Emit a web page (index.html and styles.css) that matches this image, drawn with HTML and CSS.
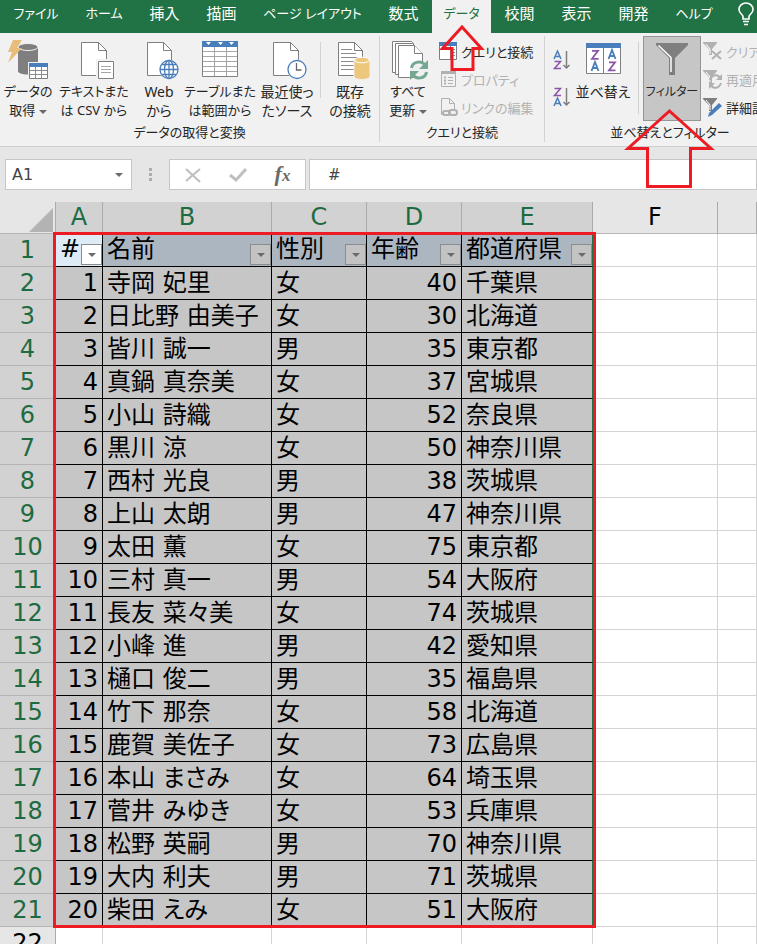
FILE: index.html
```html
<!DOCTYPE html>
<html lang="ja">
  <head>
    <meta charset="UTF-8" />
    <meta name="viewport" content="width=device-width, initial-scale=1.0" />
    <title>Excel フィルター</title>
    <link rel="stylesheet" href="styles.css" />
  </head>
  <body>
    <!-- タブ -->
    <nav class="tabs">
      <a href="#" class="tab tab-file">ファイル</a>
      <a href="#" class="tab tab-kana">ホーム</a>
      <a href="#" class="tab">挿入</a>
      <a href="#" class="tab">描画</a>
      <a href="#" class="tab tab-layout">ページ レイアウト</a>
      <a href="#" class="tab">数式</a>
      <a href="#" class="tab tab-active">データ</a>
      <a href="#" class="tab">校閲</a>
      <a href="#" class="tab">表示</a>
      <a href="#" class="tab">開発</a>
      <a href="#" class="tab tab-kana">ヘルプ</a>
      <svg class="bulb" width="18" height="24" viewBox="0 0 18 24" fill="none" stroke="#fff" stroke-width="1.6">
        <path d="M6 17v-2.500C6 12.500 2 11.500 2 7.500a7 6.500 0 0 1 14 0c0 4-4 5-4 7V17z" />
        <path d="M6 19.500h6M7 22.500h4" />
      </svg>
    </nav>

    <!-- リボン -->
    <section class="ribbon">
      <div class="group">
        <div class="tools">
          <button class="big w-56">
            <svg width="40" height="40" viewBox="0 0 40 40">
              <path d="M10 7v24c0 2 4 3.500 10 3.500s10-1.500 10-3.500V7z" fill="#7f7f7f" />
              <ellipse cx="20" cy="7" rx="10" ry="3.500" fill="#7f7f7f" stroke="#f1f1f1" />
              <path d="M5 0h9L9 8h5L0 23 4 12H0z" fill="#e8bd7c" />
              <path d="M20 22h20v17H20z" fill="#f1f1f1" />
              <path d="M21.500 23.500h18v15h-18z" fill="#fff" stroke="#7f7f7f" />
              <path d="M21 23h19v4H21z" fill="#4a7ebb" />
              <path d="M22 30.500h17M22 34.500h17M27.500 27v11M33.500 27v11" stroke="#8c8c8c" />
            </svg>
            <span>データの<br />取得 <i class="caret"></i></span>
          </button>
          <button class="big w-76">
            <svg width="40" height="40" viewBox="0 0 40 40">
              <path d="M7.500 2.500h17l8 8v25h-25z" fill="#fff" stroke="#7f7f7f" />
              <path d="M24.500 2.500v8h8" fill="none" stroke="#7f7f7f" />
              <path d="M22 19h18v21H22z" fill="#f1f1f1" />
              <path d="M24.500 21.500h15v17h-15z" fill="#fff" stroke="#7f7f7f" />
              <path d="M27 26.500h10M27 29.500h10M27 32.500h10" stroke="#a6a6a6" />
            </svg>
            <span>テキストまた<br />は CSV から</span>
          </button>
          <button class="big big-text w-54">
            <svg width="40" height="40" viewBox="0 0 40 40">
              <path d="M8.500 2.500h16l8 8v25h-24z" fill="#fff" stroke="#7f7f7f" />
              <path d="M24.500 2.500v8h8" fill="none" stroke="#7f7f7f" />
              <circle cx="30" cy="29.500" r="10" fill="#f1f1f1" />
              <g fill="#fff" stroke="#4a7ebb" stroke-width="1.300">
                <circle cx="30" cy="29.500" r="9" />
                <ellipse cx="30" cy="29.500" rx="4.500" ry="9" />
                <path d="M30 20.500v18M21 29.500h18M23 24.500h14M23 34.500h14" />
              </g>
            </svg>
            <span>Web<br />から</span>
          </button>
          <button class="big w-68">
            <svg width="40" height="40" viewBox="0 0 40 40">
              <path d="M2.500 1.500h35v35h-35z" fill="#fff" stroke="#7f7f7f" />
              <path d="M3 11.500h34M3 16.500h34M3 21.500h34M3 26.500h34M3 31.500h34M14.500 7v29M26.500 7v29" stroke="#a6a6a6" />
              <path d="M2 1h36v6H2z" fill="#4a7ebb" />
              <path d="M6 2h5L8.500 5zM18 2h5l-2.500 3zM29 2h5l-2.500 3z" fill="#fff" />
            </svg>
            <span>テーブルまた<br />は範囲から</span>
          </button>
          <button class="big big-text w-66">
            <svg width="40" height="40" viewBox="0 0 40 40">
              <path d="M6.500 2.500h17l8 8v25h-25z" fill="#fff" stroke="#7f7f7f" />
              <path d="M23.500 2.500v8h8" fill="none" stroke="#7f7f7f" />
              <circle cx="30" cy="29.500" r="10" fill="#f1f1f1" />
              <circle cx="30" cy="29.500" r="9" fill="#fff" stroke="#4a7ebb" stroke-width="1.300" />
              <path d="M29.500 23v7h5" fill="none" stroke="#666" stroke-width="1.300" />
            </svg>
            <span>最近使っ<br />たソース</span>
          </button>
          <i class="divider"></i>
          <button class="big big-text w-58">
            <svg width="40" height="40" viewBox="0 0 40 40">
              <path d="M8.500 2.500h16l8 8v25h-24z" fill="#fff" stroke="#7f7f7f" />
              <path d="M24.500 2.500v8h8" fill="none" stroke="#7f7f7f" />
              <path d="M11 9.500h11M11 13.500h15M11 17.500h18M11 21.500h13M11 25.500h13M11 29.500h13" stroke="#8c8c8c" />
              <path d="M24 19v17c0 2 3 3.500 8 3.500s8-1.500 8-3.500V19z" fill="#edc77c" stroke="#f1f1f1" />
              <ellipse cx="32" cy="20" rx="7.500" ry="2.800" fill="#edc77c" stroke="#fff" />
            </svg>
            <span>既存<br />の接続</span>
          </button>
        </div>
        <div class="group-name">データの取得と変換</div>
      </div>

      <div class="group group-query">
        <div class="tools">
          <button class="big w-56">
            <svg width="40" height="40" viewBox="0 0 40 40">
              <g fill="#fff" stroke="#7f7f7f">
                <path d="M4.500 1.500h19l2 2v29h-21z" />
                <path d="M7.500 3.500h17l2 2v29h-19z" />
                <path d="M10.500 5.500h16l8 8v24h-24z" />
                <path d="M26.500 5.500v8h8" />
              </g>
              <circle cx="31" cy="30" r="9" fill="#f1f1f1" />
              <g fill="none" stroke="#74a892" stroke-width="3">
                <path d="M23.500 28c1-7 11-8 14-2" />
                <path d="M38.500 32c-1 7-11 8-14 2" />
              </g>
              <path d="M40 20v9h-9zM22 40v-9h9z" fill="#74a892" />
            </svg>
            <span>すべて<br />更新 <i class="caret"></i></span>
          </button>
          <div class="small-list">
            <button class="small">
              <svg width="20" height="20" viewBox="0 0 20 20">
                <path d="M1.500 1.500h17v17h-17z" fill="#fff" stroke="#7f7f7f" />
                <path d="M1 1h18v4H1z" fill="#4a7ebb" />
                <path d="M12.500 5v13" stroke="#7f7f7f" />
                <path d="M14 8.500h3M14 11.500h3M14 14.500h3" stroke="#8c8c8c" />
              </svg>
              クエリと接続
            </button>
            <button class="small" disabled>
              <svg width="20" height="20" viewBox="0 0 20 20" fill="none" stroke="#b1b1b1">
                <path d="M3.500 2.500h14v15h-14z" />
                <path d="M3 3.500h15" stroke-width="3" />
                <path d="M10 8.500h5M10 11.500h5M10 14.500h5" />
                <path d="M6 8.500h2M6 11.500h2M6 14.500h2" stroke-width="2" />
              </svg>
              プロパティ
            </button>
            <button class="small" disabled>
              <svg width="20" height="20" viewBox="0 0 20 20" fill="none" stroke="#b1b1b1">
                <path d="M7 17.500H3.500v-16h8l5 5V12M11.500 1.500v5h5" />
                <g stroke-width="2">
                  <rect x="5" y="14" width="7" height="4" rx="2" />
                  <rect x="11" y="13" width="8" height="5" rx="2.500" />
                </g>
              </svg>
              リンクの編集
            </button>
          </div>
        </div>
        <div class="group-name">クエリと接続</div>
      </div>

      <div class="group group-sort">
        <div class="tools">
          <div class="sort-list">
            <button class="sort" aria-label="昇順">
              <svg width="18" height="22" viewBox="0 0 18 22" fill="none" stroke-width="1.500">
                <path d="M1 10L4.500 2 8 10M2 7.500h5" stroke="#4a7ebb" />
                <path d="M1.500 12.500h6l-6 7h6.500" stroke="#8a57a8" />
                <path d="M13.500 2v17M10.500 16l3 3 3-3" stroke="#7f7f7f" />
              </svg>
            </button>
            <button class="sort" aria-label="降順">
              <svg width="18" height="22" viewBox="0 0 18 22" fill="none" stroke-width="1.500">
                <path d="M1.500 2.500h6l-6 7h6.500" stroke="#8a57a8" />
                <path d="M1 20l3.500-8L8 20M2 17.500h5" stroke="#4a7ebb" />
                <path d="M13.500 2v17M10.500 16l3 3 3-3" stroke="#7f7f7f" />
              </svg>
            </button>
          </div>
          <button class="big big-text w-54">
            <svg width="40" height="40" viewBox="0 0 40 40" fill="none" stroke-width="1.800">
              <path d="M3.500 3.500h34v30h-34z" fill="#fff" stroke="#7f7f7f" stroke-width="1" />
              <path d="M20.500 7v26" stroke="#7f7f7f" stroke-width="1" />
              <path d="M3 3h35v5H3z" fill="#4a7ebb" />
              <path d="M9 10.800h6l-6 8h6.500M26 22.300h6l-6 8h6.500" stroke="#8a57a8" />
              <path d="M8.500 31l3.500-9 3.500 9M9.500 28h5M25.500 19l3.500-9 3.500 9M26.500 16h5" stroke="#4a7ebb" />
            </svg>
            <span>並べ替え</span>
          </button>
          <i class="divider divider-wide"></i>
          <button class="big w-58 pressed">
            <svg width="40" height="40" viewBox="0 0 40 40">
              <path d="M4 3h32v2L23 18v17h-6V18L4 5z" fill="#7f7f7f" />
              <path d="M6.500 5.500L19 17.500V32" fill="none" stroke="#fff" stroke-width="1.500" />
            </svg>
            <span>フィルター</span>
          </button>
          <div class="small-list">
            <button class="small" disabled>
              <svg width="20" height="20" viewBox="0 0 20 20">
                <path d="M0 1h14v1L9 8v6H6V8L0 2z" fill="#b1b1b1" />
                <path d="M3 3l4 5v5" fill="none" stroke="#fff" />
                <path d="M9 10l9 8M18 10l-9 8" stroke="#b1b1b1" stroke-width="2" />
              </svg>
              クリア
            </button>
            <button class="small" disabled>
              <svg width="20" height="20" viewBox="0 0 20 20">
                <path d="M0 1h14v1L9 8v6H6V8L0 2z" fill="#b1b1b1" />
                <path d="M3 3l4 5v5" fill="none" stroke="#fff" />
                <path d="M7 11c2-6 8-6 10-2M18 14c-2 6-8 6-10 2" fill="none" stroke="#b1b1b1" stroke-width="2" />
                <path d="M19 5v6h-6zM6 20v-6h6z" fill="#b1b1b1" />
              </svg>
              再適用
            </button>
            <button class="small">
              <svg width="20" height="20" viewBox="0 0 20 20">
                <path d="M0 1h14v1L9 8v6H6V8L0 2z" fill="#7f7f7f" />
                <path d="M3 3l4 5v5" fill="none" stroke="#fff" />
                <path d="M16 6l3 3-10 9-4 2 1-4z" fill="#4a7ebb" />
              </svg>
              詳細設定
            </button>
          </div>
        </div>
        <div class="group-name">並べ替えとフィルター</div>
      </div>
    </section>

    <!-- 数式バー -->
    <section class="formula-bar">
      <div class="name-box">
        <input type="text" value="A1" aria-label="名前ボックス" />
        <i class="caret"></i>
      </div>
      <div class="grip"><i></i><i></i><i></i></div>
      <div class="formula-buttons">
        <button aria-label="キャンセル">
          <svg width="18" height="16" viewBox="0 0 18 16"><path d="M2 2l14 13M16 2L2 14" stroke="#c0c0c0" stroke-width="2.200" /></svg>
        </button>
        <button aria-label="入力">
          <svg width="18" height="16" viewBox="0 0 18 16" fill="none"><path d="M1 8l6 5L17 2" stroke="#c0c0c0" stroke-width="3" /></svg>
        </button>
        <button class="fx" aria-label="関数の挿入">f<small>x</small></button>
      </div>
      <input class="formula" type="text" value="#" aria-label="数式" />
    </section>

    <!-- シート -->
    <main class="sheet">
      <table>
        <colgroup>
          <col class="col-num" />
          <col class="col-a" />
          <col class="col-b" />
          <col class="col-c" />
          <col class="col-c" />
          <col class="col-e" />
          <col class="col-f" />
          <col />
        </colgroup>
        <thead>
          <tr>
            <th class="corner"><svg width="24" height="24" viewBox="0 0 24 24"><path d="M24 0v24H0z" fill="#b3b3b3" /></svg></th>
            <th>A</th>
            <th>B</th>
            <th>C</th>
            <th>D</th>
            <th>E</th>
            <th class="plain">F</th>
            <th class="plain"></th>
          </tr>
        </thead>
        <tbody>
          <tr class="head">
            <th>1</th>
            <td class="active"><div>#<button class="drop" aria-label="# フィルター"><i class="caret"></i></button></div></td>
            <td><div>名前<button class="drop" aria-label="名前 フィルター"><i class="caret"></i></button></div></td>
            <td><div>性別<button class="drop" aria-label="性別 フィルター"><i class="caret"></i></button></div></td>
            <td><div>年齢<button class="drop" aria-label="年齢 フィルター"><i class="caret"></i></button></div></td>
            <td><div>都道府県<button class="drop" aria-label="都道府県 フィルター"><i class="caret"></i></button></div></td>
            <td></td>
            <td></td>
          </tr>
          <tr><th>2</th><td>1</td><td>寺岡 妃里</td><td>女</td><td>40</td><td>千葉県</td><td></td><td></td></tr>
          <tr><th>3</th><td>2</td><td>日比野 由美子</td><td>女</td><td>30</td><td>北海道</td><td></td><td></td></tr>
          <tr><th>4</th><td>3</td><td>皆川 誠一</td><td>男</td><td>35</td><td>東京都</td><td></td><td></td></tr>
          <tr><th>5</th><td>4</td><td>真鍋 真奈美</td><td>女</td><td>37</td><td>宮城県</td><td></td><td></td></tr>
          <tr><th>6</th><td>5</td><td>小山 詩織</td><td>女</td><td>52</td><td>奈良県</td><td></td><td></td></tr>
          <tr><th>7</th><td>6</td><td>黒川 涼</td><td>女</td><td>50</td><td>神奈川県</td><td></td><td></td></tr>
          <tr><th>8</th><td>7</td><td>西村 光良</td><td>男</td><td>38</td><td>茨城県</td><td></td><td></td></tr>
          <tr><th>9</th><td>8</td><td>上山 太朗</td><td>男</td><td>47</td><td>神奈川県</td><td></td><td></td></tr>
          <tr><th>10</th><td>9</td><td>太田 薫</td><td>女</td><td>75</td><td>東京都</td><td></td><td></td></tr>
          <tr><th>11</th><td>10</td><td>三村 真一</td><td>男</td><td>54</td><td>大阪府</td><td></td><td></td></tr>
          <tr><th>12</th><td>11</td><td>長友 菜々美</td><td>女</td><td>74</td><td>茨城県</td><td></td><td></td></tr>
          <tr><th>13</th><td>12</td><td>小峰 進</td><td>男</td><td>42</td><td>愛知県</td><td></td><td></td></tr>
          <tr><th>14</th><td>13</td><td>樋口 俊二</td><td>男</td><td>35</td><td>福島県</td><td></td><td></td></tr>
          <tr><th>15</th><td>14</td><td>竹下 那奈</td><td>女</td><td>58</td><td>北海道</td><td></td><td></td></tr>
          <tr><th>16</th><td>15</td><td>鹿賀 美佐子</td><td>女</td><td>73</td><td>広島県</td><td></td><td></td></tr>
          <tr><th>17</th><td>16</td><td>本山 まさみ</td><td>女</td><td>64</td><td>埼玉県</td><td></td><td></td></tr>
          <tr><th>18</th><td>17</td><td>菅井 みゆき</td><td>女</td><td>53</td><td>兵庫県</td><td></td><td></td></tr>
          <tr><th>19</th><td>18</td><td>松野 英嗣</td><td>男</td><td>70</td><td>神奈川県</td><td></td><td></td></tr>
          <tr><th>20</th><td>19</td><td>大内 利夫</td><td>男</td><td>71</td><td>茨城県</td><td></td><td></td></tr>
          <tr><th>21</th><td>20</td><td>柴田 えみ</td><td>女</td><td>51</td><td>大阪府</td><td></td><td></td></tr>
          <tr class="empty"><th>22</th><td></td><td></td><td></td><td></td><td></td><td></td><td></td></tr>
        </tbody>
      </table>
      <div class="red-frame"></div>
    </main>

    <!-- 赤い矢印 -->
    <svg class="arrow arrow-tab" width="48" height="50" viewBox="0 0 48 50">
      <path d="M24 3L43.500 24.500H35V45.500H14V24.500H4.500z" />
    </svg>
    <svg class="arrow arrow-filter" width="92" height="82" viewBox="0 0 92 82">
      <path d="M45.500 4L87 41.500H66.500V79.500H23.500V41.500H4z" />
    </svg>
  </body>
</html>
```

FILE: styles.css
```css
/* 全体 */
* {
  box-sizing: border-box;
  margin: 0;
  padding: 0;
}
body {
  height: 100vh;
  overflow: hidden;
  position: relative;
  background: #e6e6e6;
  color: #262626;
  font-family: "Noto Sans", "Noto Sans CJK JP", sans-serif;
  font-size: 15px;
  font-feature-settings: "palt";
}
button,
input {
  font: inherit;
  font-feature-settings: inherit;
  color: inherit;
  border: none;
  background: none;
}
svg {
  flex: none;
}
.caret {
  display: inline-block;
  border: 4px solid transparent;
  border-top-color: #6a6a6a;
  border-bottom: none;
  vertical-align: middle;
}

/* タブ */
.tabs {
  display: flex;
  height: 33px;
  background: #217346;
  overflow: hidden;
}
.tab {
  flex: none;
  width: 57px;
  line-height: 27px;
  text-align: center;
  white-space: nowrap;
  color: #fff;
  text-decoration: none;
}
.tab-file,
.tab-kana,
.tab-layout,
.tab-active {
  font-size: 13px;
}
.tab-file {
  width: 72px;
}
.tab-kana {
  width: 64px;
}
.tab-layout {
  width: 125px;
}
.tab-active {
  width: 59px;
  background: #f1f1f1;
  color: #217346;
}
.bulb {
  margin: 2px 0 0 11px;
}

/* リボン */
.ribbon {
  display: flex;
  height: 114px;
  background: #f1f1f1;
  border-bottom: 1px solid #cfcfcf;
  padding-top: 3px;
  overflow: hidden;
  font-size: 13px;
}
.group {
  display: flex;
  flex-direction: column;
  flex: none;
  border-right: 1px solid #d2d2d2;
  margin-bottom: 4px;
}
.group-query {
  width: 165px;
}
.group-sort {
  width: 250px;
  border-right: none;
}
.tools {
  display: flex;
  height: 89px;
  align-items: flex-start;
}
.group-name {
  line-height: 20px;
  text-align: center;
}
.big {
  display: flex;
  flex-direction: column;
  align-items: center;
  gap: 2px;
  height: 85px;
  padding-top: 4px;
  line-height: 19px;
  white-space: nowrap;
  flex: none;
}
.big-text {
  font-size: 14px;
}
.w-54 {
  width: 54px;
}
.w-56 {
  width: 56px;
}
.w-58 {
  width: 58px;
}
.w-66 {
  width: 66px;
}
.w-68 {
  width: 68px;
}
.w-76 {
  width: 76px;
}
.pressed {
  background: #c6c6c6;
  border: 1px solid #969696;
  padding-top: 3px;
  font-size: 12px;
}
.divider {
  width: 1px;
  height: 56px;
  margin-top: 6px;
  background: #d2d2d2;
}
.divider-wide {
  height: 72px;
  margin: 6px 4px 0 8px;
}
.small-list {
  flex: none;
  padding: 1px 0 0 2px;
}
.small {
  display: flex;
  align-items: center;
  gap: 3px;
  height: 28px;
  white-space: nowrap;
}
.small:disabled {
  color: #b1b1b1;
}
.sort-list {
  display: flex;
  flex-direction: column;
  gap: 15px;
  width: 31px;
  padding: 13px 0 0 8px;
}
.sort {
  height: 22px;
  text-align: left;
}

/* 数式バー */
.formula-bar {
  display: flex;
  height: 55px;
  padding: 12px 0 12px 5px;
  font-family: "DejaVu Sans", sans-serif;
  font-size: 16px;
  color: #444;
}
.name-box,
.formula-buttons,
.formula {
  background: #fff;
  border: 1px solid #c6c6c6;
}
.name-box {
  display: flex;
  align-items: center;
  width: 127px;
  padding: 0 8px 0 6px;
}
.name-box input {
  flex: 1;
  min-width: 0;
}
.grip {
  display: flex;
  flex-direction: column;
  justify-content: center;
  align-items: center;
  gap: 2px;
  width: 37px;
}
.grip i {
  width: 3px;
  height: 3px;
  background: #adadad;
}
.formula-buttons {
  display: flex;
  align-items: center;
  width: 137px;
  margin-right: 3px;
}
.formula-buttons button {
  flex: 1;
}
.formula-buttons svg {
  display: block;
  margin: 0 auto;
}
.formula-buttons .fx {
  font: italic bold 22px/24px "Liberation Serif", serif;
  color: #6a6a6a;
}
.fx small {
  font-size: 17px;
}
.formula {
  flex: 1;
  min-width: 0;
  padding-left: 18px;
  font-size: 15px;
}

/* シート */
.sheet {
  position: relative;
}
table {
  width: 100%;
  table-layout: fixed;
  border-collapse: separate;
  border-spacing: 0;
  background: #fff;
  font-family: "DejaVu Sans", "Noto Sans CJK JP", sans-serif;
  font-size: 24px;
  line-height: 32px;
  color: #000;
}
.col-num {
  width: 56px;
}
.col-a {
  width: 47px;
}
.col-b {
  width: 169px;
}
.col-c {
  width: 95px;
}
.col-e {
  width: 131px;
}
.col-f {
  width: 125px;
}
th {
  height: 33px;
  font-weight: normal;
  background: #d2d2d2;
  color: #1e6b41;
  border-right: 1px solid #ababab;
  border-bottom: 1px solid #b5b5b5;
}
thead th {
  height: 32px;
  line-height: 31px;
}
thead .corner,
thead .plain {
  background: #e6e6e6;
  color: #000;
}
.corner svg {
  display: block;
  margin: 4px 2px 0 auto;
}
td {
  height: 33px;
  padding: 0 4px;
  white-space: nowrap;
  background: #c6c6c6;
  border-right: 1px solid #000;
  border-bottom: 1px solid #000;
}
td:nth-child(2),
td:nth-child(5) {
  text-align: right;
}
td:nth-child(6) {
  border-right-color: #217346;
}
td:nth-child(n + 7),
.empty td {
  background: #fff;
  border-color: #d4d4d4;
}
.empty th {
  background: #e6e6e6;
  color: #000;
}
.head td {
  background: #acb6c0;
  padding-right: 0;
}
.head .active {
  background: #ddebf7;
}
.head td:nth-child(n + 7) {
  background: #fff;
}
.head div {
  display: flex;
  justify-content: space-between;
  align-items: flex-end;
  height: 32px;
  padding-bottom: 1px;
  line-height: 31px;
}
.drop {
  display: flex;
  flex: none;
  justify-content: center;
  align-items: center;
  width: 21px;
  height: 21px;
  background: #c3c3c3;
  border: 1px solid #8c8c8c;
}
.active .drop {
  background: #fff;
  margin-left: -4px;
}
.red-frame {
  position: absolute;
  left: 53px;
  top: 30px;
  width: 543px;
  height: 696px;
  border: 3px solid #ed1c24;
}

/* 矢印 */
.arrow {
  position: absolute;
  fill: none;
  stroke: #ed1c24;
  stroke-width: 3;
}
.arrow-tab {
  left: 438px;
  top: 24px;
}
.arrow-filter {
  left: 624px;
  top: 107px;
}
```
